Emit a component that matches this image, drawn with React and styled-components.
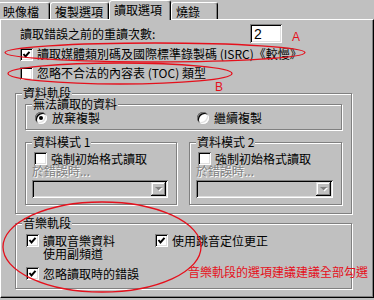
import React from "react";
import styled, { createGlobalStyle, css } from "styled-components";

const GlobalStyle = createGlobalStyle`
	* { box-sizing: border-box; }
	body {
		margin: 0;
		background: #c0c0c0;
		font-family: "Noto Sans CJK TC", "Liberation Sans", sans-serif;
		font-size: 12px;
		color: #000;
	}
`;

const sunken = css`
	box-shadow: inset 1px 1px #808080, inset -1px -1px #fff, inset 2px 2px #000,
		inset -2px -2px #dfdfdf;
`;

const Window = styled.div`
	position: relative;
	width: 374px;
	height: 300px;
	overflow: hidden;
	background: #c0c0c0;
`;

const TabStrip = styled.div`
	display: flex;
	align-items: flex-end;
	height: 19px;
	margin-left: -2px;
`;

const Tab = styled.div`
	width: ${(p) => p.$w}px;
	height: 17px;
	padding-left: 4px;
	border-top: 1px solid #fff;
	border-left: 1px solid #fff;
	border-right: 1px solid #000;
	border-radius: 3px 3px 0 0;
	box-shadow: inset -1px 0 #808080;
	line-height: 18px;
	white-space: nowrap;
	${(p) =>
		p.$active &&
		css`
			position: relative;
			z-index: 1;
			height: 20px;
			margin-bottom: -1px;
			background: #c0c0c0;
			line-height: 17px;
		`}
`;

const Panel = styled.div`
	height: 279px;
	padding: 4px 21px 0 14px;
	border-top: 1px solid #fff;
	border-left: 1px solid #fff;
	border-right: 1px solid #000;
	border-bottom: 1px solid #000;
	box-shadow: inset -1px -1px #808080;
`;

const RetryRow = styled.div`
	display: flex;
	align-items: center;
	justify-content: space-between;
	width: 267px;
	height: 19px;
	padding-left: 5px;
	line-height: 14px;
`;

const NumberBox = styled.div`
	width: 32px;
	height: 19px;
	padding: 2px 0 0 4px;
	background: #fff;
	font-family: "Liberation Sans", sans-serif;
	font-size: 14px;
	line-height: 16px;
	${sunken}
`;

const CheckRow = styled.label`
	display: flex;
	align-items: center;
	gap: 4px;
	height: ${(p) => p.$h || 14}px;
	margin-top: ${(p) => p.$top || 0}px;
	padding-left: ${(p) => p.$indent || 0}px;
	line-height: ${(p) => p.$h || 14}px;
	white-space: nowrap;
`;

const Box = styled.span`
	flex: none;
	display: inline-flex;
	width: 13px;
	height: 13px;
	background: #fff;
	${sunken}
`;

const RadioDot = styled.span`
	flex: none;
	display: inline-flex;
	align-items: center;
	justify-content: center;
	width: 12px;
	height: 12px;
	border-radius: 50%;
	background: #fff;
	${sunken}
	&::after {
		content: "";
		width: 4px;
		height: 4px;
		border-radius: 50%;
		background: ${(p) => (p.$on ? "#000" : "transparent")};
	}
`;

const Group = styled.div`
	position: relative;
	height: ${(p) => p.$h}px;
	margin-top: ${(p) => p.$top || 0}px;
	padding: ${(p) => p.$pad};
	border: 1px solid #808080;
	box-shadow: inset 1px 1px #fff, 1px 1px #fff;
`;

const GroupTitle = styled.span`
	position: absolute;
	top: -7px;
	left: 6px;
	padding: 0 1px;
	background: #c0c0c0;
	line-height: 12px;
	white-space: nowrap;
`;

const RadioGrid = styled.div`
	display: grid;
	grid-template-columns: 162px 1fr;
	align-items: center;
	height: 13px;
`;

const RadioOption = styled.label`
	display: flex;
	align-items: center;
	gap: 5px;
	line-height: 13px;
`;

const ModeRow = styled.div`
	display: grid;
	grid-template-columns: 152px 153px;
	gap: 12px;
	margin-top: 12px;
`;

const Hint = styled.div`
	height: 12px;
	line-height: 12px;
	color: #808080;
	text-shadow: 1px 1px #fff;
`;

const Select = styled.div`
	display: flex;
	justify-content: flex-end;
	align-items: center;
	height: 18px;
	margin-top: 3px;
	padding: 2px;
	background: #c0c0c0;
	${sunken}
`;

const ArrowButton = styled.span`
	display: flex;
	align-items: center;
	justify-content: center;
	width: 15px;
	height: 14px;
	background: #c0c0c0;
	box-shadow: inset -1px -1px #000, inset 1px 1px #dfdfdf, inset -2px -2px #808080,
		inset 2px 2px #fff;
`;

const MusicGrid = styled.div`
	display: grid;
	grid-template-columns: 129px 1fr;
	row-gap: 7px;
`;

const MusicItem = styled.label`
	display: flex;
	align-items: flex-start;
	gap: 4px;
	line-height: 13px;
	white-space: nowrap;
	grid-column: ${(p) => (p.$wide ? "1 / -1" : "auto")};
`;

const Overlay = styled.svg`
	position: absolute;
	inset: 0;
	z-index: 2;
	pointer-events: none;
`;

const Note = styled.span`
	position: absolute;
	z-index: 3;
	left: ${(p) => p.$x}px;
	top: ${(p) => p.$y}px;
	color: #e5101c;
	font-family: ${(p) => (p.$latin ? '"Liberation Sans", sans-serif' : "inherit")};
	font-size: ${(p) => (p.$latin ? 12 : 12)}px;
	line-height: 14px;
	white-space: nowrap;
`;

function Check({ on }) {
	return (
		<Box>
			{on && (
				<svg width="13" height="13" viewBox="0 0 13 13">
					<polyline
						points="3.5,6 5.5,8.5 9.5,3.8"
						fill="none"
						stroke="#000"
						strokeWidth="2"
					/>
				</svg>
			)}
		</Box>
	);
}

function Dropdown() {
	return (
		<Select>
			<ArrowButton>
				<svg width="8" height="5" viewBox="0 0 8 5">
					<polygon points="1,1 8,1 4.5,4.5" fill="#fff" />
					<polygon points="0,0 7,0 3.5,3.5" fill="#808080" />
				</svg>
			</ArrowButton>
		</Select>
	);
}

function ModeBox({ title }) {
	return (
		<Group $h={63} $pad="9px 8px 0 6px">
			<GroupTitle>{title}</GroupTitle>
			<CheckRow $indent={2} $h={13}>
				<Check />
				強制初始格式讀取
			</CheckRow>
			<Hint>於錯誤時...</Hint>
			<Dropdown />
		</Group>
	);
}

const tabs = [
	{ label: "映像檔", w: 52 },
	{ label: "複製選項", w: 59 },
	{ label: "讀取選項", w: 62, active: true },
	{ label: "燒錄", w: 47 },
];

export default function App() {
	return (
		<Window>
			<GlobalStyle />
			<TabStrip>
				{tabs.map((t) => (
					<Tab key={t.label} $w={t.w} $active={t.active}>
						{t.label}
					</Tab>
				))}
			</TabStrip>
			<Panel>
				<RetryRow>
					<span>讀取錯誤之前的重讀次數:</span>
					<NumberBox>2</NumberBox>
				</RetryRow>
				<CheckRow $top={4} $indent={5}>
					<Check on />
					讀取媒體類別碼及國際標準錄製碼 (ISRC)《較慢》
				</CheckRow>
				<CheckRow $top={5} $indent={5}>
					<Check />
					忽略不合法的內容表 (TOC) 類型
				</CheckRow>

				<Group $h={121} $top={13} $pad="10px 9px 0 9px">
					<GroupTitle>資料軌段</GroupTitle>
					<Group $h={26} $pad="6px 0 0 9px">
						<GroupTitle>無法讀取的資料</GroupTitle>
						<RadioGrid>
							<RadioOption>
								<RadioDot $on />
								放棄複製
							</RadioOption>
							<RadioOption>
								<RadioDot />
								繼續複製
							</RadioOption>
						</RadioGrid>
					</Group>
					<ModeRow>
						<ModeBox title="資料模式 1" />
						<ModeBox title="資料模式 2" />
					</ModeRow>
				</Group>

				<Group $h={66} $top={9} $pad="10px 0 0 10px">
					<GroupTitle>音樂軌段</GroupTitle>
					<MusicGrid>
						<MusicItem>
							<Check on />
							<span>
								讀取音樂資料
								<br />
								使用副頻道
							</span>
						</MusicItem>
						<MusicItem>
							<Check on />
							<span>使用跳音定位更正</span>
						</MusicItem>
						<MusicItem $wide>
							<Check on />
							<span>忽略讀取時的錯誤</span>
						</MusicItem>
					</MusicGrid>
				</Group>
			</Panel>

			<Overlay width="374" height="300" viewBox="0 0 374 300">
				<g fill="none" stroke="#e5101c" strokeWidth="1.3">
					<ellipse cx="155" cy="52.5" rx="150" ry="9.5" />
					<ellipse cx="120" cy="73.5" rx="112" ry="10.5" />
					<ellipse cx="102" cy="247" rx="99" ry="45" />
				</g>
			</Overlay>
			<Note $latin $x={292} $y={30}>
				A
			</Note>
			<Note $latin $x={215} $y={80}>
				B
			</Note>
			<Note $x={188} $y={265}>
				音樂軌段的選項建議建議全部勾選
			</Note>
		</Window>
	);
}
